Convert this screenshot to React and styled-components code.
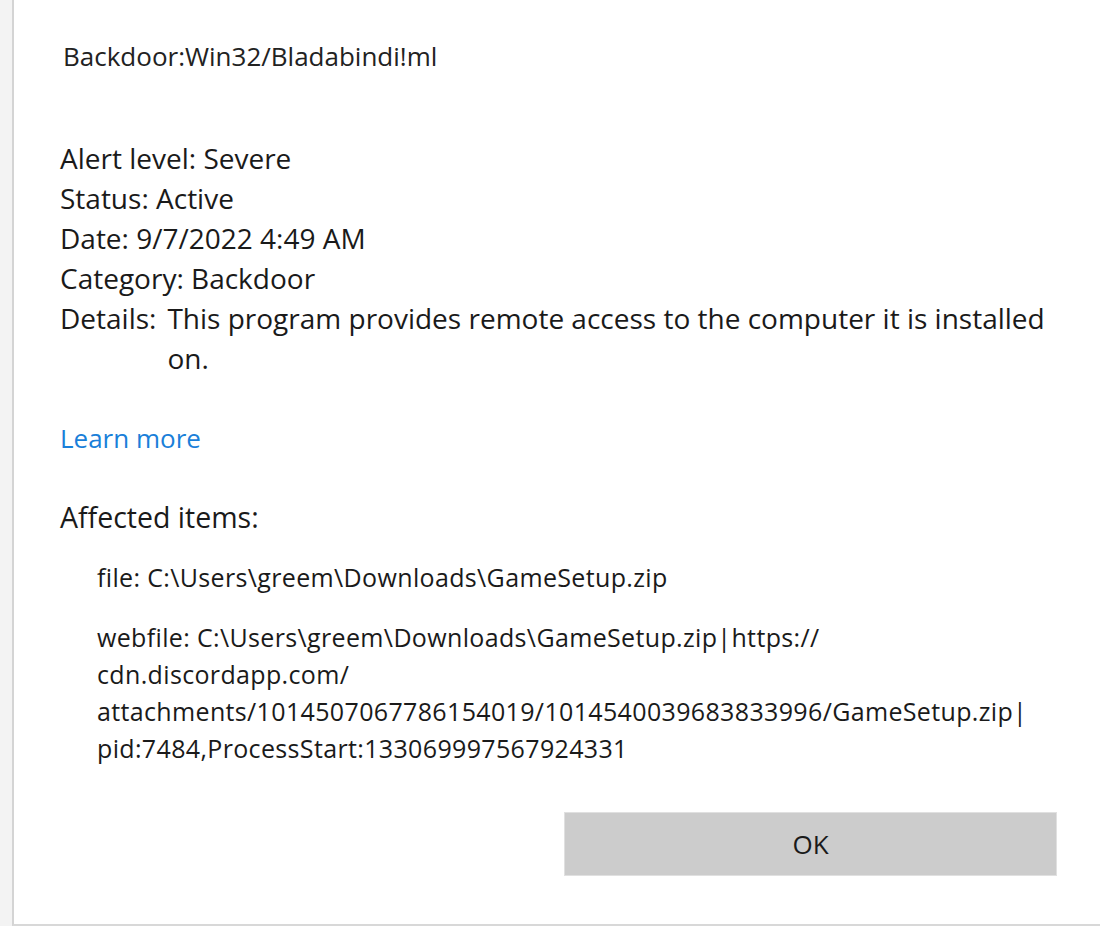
import React from "react";
import styled, { createGlobalStyle } from "styled-components";

const GlobalStyle = createGlobalStyle`
  html, body {
    margin: 0;
    padding: 0;
    background: #f3f3f3;
  }
  body {
    font-family: "Open Sans", "Noto Sans", "Liberation Sans", sans-serif;
    color: #1a1a1a;
  }
`;

const Page = styled.div`
  width: 1100px;
  height: 926px;
  display: flex;
  background: #f3f3f3;
  box-sizing: border-box;
  padding-left: 12px;
`;

const Panel = styled.div`
  flex: 1;
  background: #fff;
  border-left: 2px solid #d4d4d4;
  border-bottom: 2px solid #d8d8d8;
  box-sizing: border-box;
  padding: 40px 43px 0 46px;
  display: flex;
  flex-direction: column;
`;

const Title = styled.div`
  font-size: 26px;
  line-height: 32px;
  padding-left: 3px;
  color: #222;
`;

const Info = styled.div`
  margin-top: 66px;
  font-size: 28px;
  line-height: 40px;
`;

const Row = styled.div`
  display: flex;
  gap: 11px;
`;

const Label = styled.span`
  flex: none;
`;

const Value = styled.span`
  flex: 1;
`;

const Link = styled.a`
  align-self: flex-start;
  margin-top: 40px;
  font-size: 26px;
  line-height: 40px;
  color: #1a7fd9;
  text-decoration: none;
`;

const Heading = styled.div`
  margin-top: 39px;
  font-size: 28.5px;
  line-height: 40px;
`;

const Items = styled.div`
  padding-left: 37px;
  margin-top: 22px;
  font-size: 25px;
  letter-spacing: 0.35px;
  line-height: 37px;
  display: flex;
  flex-direction: column;
  gap: 23px;
`;

const Item = styled.div`
  white-space: nowrap;
`;

const Footer = styled.div`
  display: flex;
  justify-content: flex-end;
  margin-top: 45px;
`;

const Button = styled.button`
  width: 493px;
  height: 64px;
  background: #cccccc;
  border: 1px solid #e0e0e0;
  font-family: inherit;
  font-size: 26px;
  color: #1a1a1a;
`;

function App() {
  return (
    <Page>
      <GlobalStyle />
      <Panel>
        <Title>Backdoor:Win32/Bladabindi!ml</Title>
        <Info>
          <div>Alert level: Severe</div>
          <div>Status: Active</div>
          <div>Date: 9/7/2022 4:49 AM</div>
          <div>Category: Backdoor</div>
          <Row>
            <Label>Details:</Label>
            <Value>
              This program provides remote access to the computer it is
              installed on.
            </Value>
          </Row>
        </Info>
        <Link href="#">Learn more</Link>
        <Heading>Affected items:</Heading>
        <Items>
          <Item>file: C:\Users\greem\Downloads\GameSetup.zip</Item>
          <Item>
            webfile: C:\Users\greem\Downloads\GameSetup.zip|https://
            <br />
            cdn.discordapp.com/
            <br />
            attachments/1014507067786154019/1014540039683833996/GameSetup.zip|
            <br />
            pid:7484,ProcessStart:133069997567924331
          </Item>
        </Items>
        <Footer>
          <Button>OK</Button>
        </Footer>
      </Panel>
    </Page>
  );
}

export default App;
